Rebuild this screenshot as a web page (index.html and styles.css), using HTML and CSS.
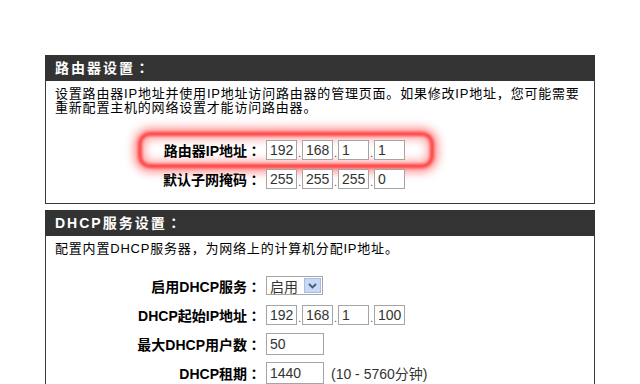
FILE: index.html
```html
<!doctype html>
<html>
    <head>
        <title>网络设置</title>
        <meta charset="UTF-8">
        <link rel="stylesheet" href="styles.css">
    </head>

    <body>
        <!--Router Start-->
        <section class="panel">
            <h1 class="panel-head">路由器设置：</h1>
            <div class="panel-body router">
                <p class="desc">设置路由器IP地址并使用IP地址访问路由器的管理页面。如果修改IP地址，您可能需要<br>重新配置主机的网络设置才能访问路由器。</p>
                <div class="glow"></div>
                <div class="form">
                    <div class="row">
                        <label class="label">路由器IP地址：</label>
                        <div class="ip">
                            <span class="box">192</span><span class="dot">.</span><span class="box">168</span><span class="dot">.</span><span class="box">1</span><span class="dot">.</span><span class="box">1</span>
                        </div>
                    </div>
                    <div class="row">
                        <label class="label">默认子网掩码：</label>
                        <div class="ip">
                            <span class="box">255</span><span class="dot">.</span><span class="box">255</span><span class="dot">.</span><span class="box">255</span><span class="dot">.</span><span class="box">0</span>
                        </div>
                    </div>
                </div>
            </div>
        </section>
        <!--Router End-->

        <!--DHCP Start-->
        <section class="panel">
            <h1 class="panel-head dhcp-head">DHCP服务设置：</h1>
            <div class="panel-body">
                <p class="desc">配置内置DHCP服务器，为网络上的计算机分配IP地址。</p>
                <div class="form dhcp">
                    <div class="row">
                        <label class="label">启用DHCP服务：</label>
                        <div class="select">
                            <span class="select-text">启用</span>
                            <span class="select-btn">
                                <svg width="9" height="6" viewBox="0 0 9 6"><path d="M1 1 L4.5 4.5 L8 1" fill="none" stroke="#3f5a8c" stroke-width="1.8"/></svg>
                            </span>
                        </div>
                    </div>
                    <div class="row">
                        <label class="label">DHCP起始IP地址：</label>
                        <div class="ip">
                            <span class="box">192</span><span class="dot">.</span><span class="box">168</span><span class="dot">.</span><span class="box">1</span><span class="dot">.</span><span class="box">100</span>
                        </div>
                    </div>
                    <div class="row">
                        <label class="label">最大DHCP用户数：</label>
                        <span class="box wide">50</span>
                    </div>
                    <div class="row">
                        <label class="label">DHCP租期：</label>
                        <span class="box wide">1440</span>
                        <span class="hint">(10 - 5760分钟)</span>
                    </div>
                </div>
            </div>
        </section>
        <!--DHCP End-->
    </body>
</html>
```

FILE: styles.css
```css
body{
    margin: 0;
    padding: 55px 0 0 45px;
    background: #FFFFFF;
    font-family: "Liberation Sans", "Noto Sans CJK SC", sans-serif;
    color: #000;
}

.panel{
    width: 550px;
    margin-bottom: 6px;
}

.panel-head{
    margin: 0;
    height: 26px;
    line-height: 26px;
    padding-left: 10px;
    background: #333333;
    color: white;
    font-family: "Liberation Sans", "Noto Sans CJK JP", sans-serif;
    font-size: 14px;
    font-weight: bold;
    letter-spacing: 2px;
}

.panel-body{
    position: relative;
    border: 1px solid #3a3a3a;
    border-top: none;
    padding: 6px 9px 10px;
}

.desc{
    margin: 0;
    font-size: 13px;
    line-height: 14px;
    letter-spacing: 0.8px;
}

/* Form rows */
.form{
    position: relative;
    margin-top: 20px;
}
.form.dhcp{
    margin-top: 15px;
}
.row{
    display: flex;
    align-items: center;
    height: 29px;
}
.label{
    width: 206px;
    margin-right: 5px;
    text-align: right;
    font-family: "Liberation Sans", "Noto Sans CJK JP", sans-serif;
    font-size: 14px;
    font-weight: bold;
    white-space: nowrap;
}

.ip{
    display: flex;
    align-items: flex-end;
}
.box{
    display: inline-block;
    box-sizing: border-box;
    width: 31px;
    height: 20px;
    line-height: 18px;
    padding-left: 3px;
    border: 1px solid #a5a5a5;
    background: white;
    color: #333;
    font-size: 14px;
}
.box.wide{
    width: 58px;
    height: 22px;
    line-height: 20px;
}
.dot{
    width: 5px;
    text-align: center;
    font-size: 11px;
    line-height: 14px;
    color: #555;
}
.hint{
    margin-left: 7px;
    font-size: 14px;
    color: #333;
}

/* Select */
.select{
    display: flex;
    align-items: center;
    box-sizing: border-box;
    width: 57px;
    height: 19px;
    border: 1px solid #a5a5a5;
    background: white;
}
.select-text{
    flex: 1;
    padding-left: 3px;
    font-size: 14px;
    color: #333;
}
.select-btn{
    display: flex;
    align-items: center;
    justify-content: center;
    width: 15px;
    height: 13px;
    margin-right: 1px;
    border: 1px solid #a7bde6;
    background: #c9d8f3;
}

/* Highlight */
.glow{
    position: absolute;
    left: 92px;
    top: 51px;
    width: 288px;
    height: 28px;
    border: 4px solid #ff3b3b;
    border-radius: 12px;
    box-shadow: 0 0 8px 4px rgba(255, 50, 50, 0.55), inset 0 0 8px 3px rgba(255, 70, 70, 0.5);
    filter: blur(1.5px);
    pointer-events: none;
}
```
